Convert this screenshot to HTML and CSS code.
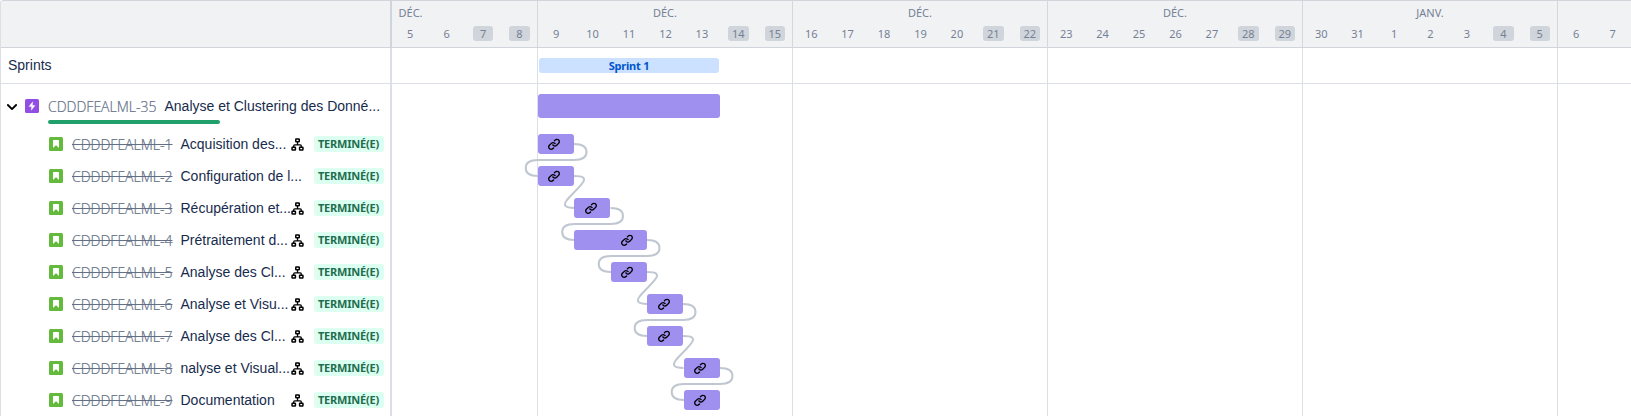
FILE: index.html
```html
<!DOCTYPE html>
<html lang="fr">
<head>
<meta charset="utf-8">
<title>Chronologie</title>
<link rel="stylesheet" href="styles.css">
</head>
<body>
<svg class="defs" aria-hidden="true">
  <symbol id="link" viewBox="0 0 24 24"><path d="M12.856 5.457l-.937.92a1.002 1.002 0 000 1.437 1.047 1.047 0 001.463 0l.984-.966c.967-.95 2.542-1.135 3.602-.288a2.54 2.54 0 01.203 3.81l-2.903 2.852a2.646 2.646 0 01-3.696 0l-1.11-1.09L9 13.57l1.108 1.089c1.822 1.788 4.802 1.788 6.622 0l2.905-2.852a4.558 4.558 0 00-.357-6.82c-1.893-1.517-4.695-1.226-6.422.47M11.144 19.543l.937-.92a1.002 1.002 0 000-1.437 1.047 1.047 0 00-1.462 0l-.985.966c-.967.95-2.542 1.135-3.602.288a2.54 2.54 0 01-.203-3.81l2.903-2.852a2.646 2.646 0 013.696 0l1.11 1.09L15 11.43l-1.108-1.089c-1.822-1.788-4.802-1.788-6.622 0l-2.905 2.852a4.558 4.558 0 00.357 6.82c1.893 1.517 4.695 1.226 6.422-.47"/></symbol>
  <symbol id="story" viewBox="0 0 14 14"><rect width="14" height="14" rx="1.6" fill="#63ba3c"/><path d="M4.6 3h4.8a.6.6 0 01.6.6V11L7 8.2 4 11V3.600a.6.6 0 01.6-.6z" fill="#fff"/></symbol>
  <symbol id="tree" viewBox="0 0 13 13"><g fill="none" stroke="#000" stroke-width="1.5"><rect x="4.75" y="1.05" width="3.5" height="2.7" rx=".5"/><rect x="1.050" y="9.35" width="3.4" height="2.6" rx=".5"/><rect x="8.55" y="9.35" width="3.4" height="2.6" rx=".5"/><path d="M6.500 4v3M2.750 9.300V7.700q0-.9.9-.9h5.700q.9 0 .9.900v1.600" stroke-width="1.300"/></g></symbol>
</svg>
<main class="roadmap">
  <section class="list">
    <div class="list-head"></div>
    <div class="sprints-label">Sprints</div>
    <div class="epic">
      <svg class="chevron" viewBox="0 0 12 8"><path d="M1.900 2L6 6.100 10.100 2" fill="none" stroke="#000" stroke-width="1.900" stroke-linecap="round" stroke-linejoin="round"/></svg>
      <svg class="type" viewBox="0 0 14 14"><rect width="14" height="14" rx="1.6" fill="#904ee2"/><path d="M7.700 2.800L4 7.600h2.600l-.3 3.700L10 6.500H7.400z" fill="#fff" stroke="#fff" stroke-width=".4" stroke-linejoin="round"/></svg>
      <span class="key">CDDDFEALML-35</span><span class="title">Analyse et Clustering des Donné...</span>
    </div>
    <div class="progress"></div>
    <div class="item"><svg class="type"><use href="#story"/></svg><span class="key">CDDDFEALML-1</span><span class="title">Acquisition des...</span><svg class="tree"><use href="#tree"/></svg><span class="status">TERMINÉ(E)</span></div>
    <div class="item"><svg class="type"><use href="#story"/></svg><span class="key">CDDDFEALML-2</span><span class="title">Configuration de l...</span><span class="status">TERMINÉ(E)</span></div>
    <div class="item"><svg class="type"><use href="#story"/></svg><span class="key">CDDDFEALML-3</span><span class="title">Récupération et...</span><svg class="tree"><use href="#tree"/></svg><span class="status">TERMINÉ(E)</span></div>
    <div class="item"><svg class="type"><use href="#story"/></svg><span class="key">CDDDFEALML-4</span><span class="title">Prétraitement d...</span><svg class="tree"><use href="#tree"/></svg><span class="status">TERMINÉ(E)</span></div>
    <div class="item"><svg class="type"><use href="#story"/></svg><span class="key">CDDDFEALML-5</span><span class="title">Analyse des Cl...</span><svg class="tree"><use href="#tree"/></svg><span class="status">TERMINÉ(E)</span></div>
    <div class="item"><svg class="type"><use href="#story"/></svg><span class="key">CDDDFEALML-6</span><span class="title">Analyse et Visu...</span><svg class="tree"><use href="#tree"/></svg><span class="status">TERMINÉ(E)</span></div>
    <div class="item"><svg class="type"><use href="#story"/></svg><span class="key">CDDDFEALML-7</span><span class="title">Analyse des Cl...</span><svg class="tree"><use href="#tree"/></svg><span class="status">TERMINÉ(E)</span></div>
    <div class="item"><svg class="type"><use href="#story"/></svg><span class="key">CDDDFEALML-8</span><span class="title">nalyse et Visual...</span><svg class="tree"><use href="#tree"/></svg><span class="status">TERMINÉ(E)</span></div>
    <div class="item"><svg class="type"><use href="#story"/></svg><span class="key">CDDDFEALML-9</span><span class="title">Documentation</span><svg class="tree"><use href="#tree"/></svg><span class="status">TERMINÉ(E)</span></div>
  </section>
  <section class="timeline">
    <div class="weeks">
      <div class="week first"><div class="month">DÉC.</div><div class="days"><span>5</span><span>6</span><span class="off">7</span><span class="off">8</span></div></div>
      <div class="week"><div class="month">DÉC.</div><div class="days"><span>9</span><span>10</span><span>11</span><span>12</span><span>13</span><span class="off">14</span><span class="off">15</span></div></div>
      <div class="week"><div class="month">DÉC.</div><div class="days"><span>16</span><span>17</span><span>18</span><span>19</span><span>20</span><span class="off">21</span><span class="off">22</span></div></div>
      <div class="week"><div class="month">DÉC.</div><div class="days"><span>23</span><span>24</span><span>25</span><span>26</span><span>27</span><span class="off">28</span><span class="off">29</span></div></div>
      <div class="week"><div class="month">JANV.</div><div class="days"><span>30</span><span>31</span><span>1</span><span>2</span><span>3</span><span class="off">4</span><span class="off">5</span></div></div>
      <div class="week last"><div class="month"></div><div class="days"><span>6</span><span>7</span></div></div>
    </div>
    <div class="sprint-row"><div class="sprint">Sprint 1</div></div>
    <div class="chart">
      <svg class="links" viewBox="392 84 1239 332">
        <defs>
          <path id="loop" d="M36 0C44.500 0 48.500 3 48.500 8S44.500 16 36 16H0C-8.500 16-12.300 19-12.300 24S-8.500 32 0 32"/>
          <path id="slope" d="M36 0C45.500 0 48.500 2 44 7.700C39.500 13.500 33.500 18.500 29 24C25 29.200 26.500 32 36.500 32"/>
        </defs>
        <use href="#loop" x="538" y="144"/><use href="#slope" x="538" y="176"/>
        <use href="#loop" x="574.500" y="208"/>
        <use href="#loop" x="611" y="240"/><use href="#slope" x="611" y="272"/>
        <use href="#loop" x="647" y="304"/><use href="#slope" x="647" y="336"/>
        <use href="#loop" x="684" y="368"/>
      </svg>
      <div class="bar-row epic-row"><div class="bar" style="--start:0;--span:5"></div></div>
      <div class="bar-row"><div class="bar" style="--start:0;--span:1"><svg><use href="#link"/></svg></div></div>
      <div class="bar-row"><div class="bar" style="--start:0;--span:1"><svg><use href="#link"/></svg></div></div>
      <div class="bar-row"><div class="bar" style="--start:1;--span:1"><svg><use href="#link"/></svg></div></div>
      <div class="bar-row"><div class="bar" style="--start:1;--span:2"><svg><use href="#link"/></svg></div></div>
      <div class="bar-row"><div class="bar" style="--start:2;--span:1"><svg><use href="#link"/></svg></div></div>
      <div class="bar-row"><div class="bar" style="--start:3;--span:1"><svg><use href="#link"/></svg></div></div>
      <div class="bar-row"><div class="bar" style="--start:3;--span:1"><svg><use href="#link"/></svg></div></div>
      <div class="bar-row"><div class="bar" style="--start:4;--span:1"><svg><use href="#link"/></svg></div></div>
      <div class="bar-row"><div class="bar" style="--start:4;--span:1"><svg><use href="#link"/></svg></div></div>
    </div>
  </section>
</main>
</body>
</html>
```
FILE: styles.css
```css
* { box-sizing: border-box; }
body { margin: 0; background: #fff; font-family: "Noto Sans", "Open Sans", sans-serif; color: #172b4d; overflow: hidden; }
.defs { position: absolute; width: 0; height: 0; }
.roadmap { display: flex; width: 1631px; height: 416px; overflow: hidden; border-left: 1px solid #dcdfe5; border-top-left-radius: 3px; --day: 36.4286px; }

.list { flex: none; width: 391px; border-right: 2px solid #dcdfe5; }
.list-head { height: 48px; background: #f1f2f4; border-top: 1px solid #d0d4db; border-bottom: 1px solid #d0d4db; border-top-left-radius: 3px; margin-right: -2px; border-right: 2px solid #d0d4db; }
.sprints-label { height: 36px; padding: 0 7px; border-bottom: 1px solid #dcdfe5; font: 14px/35px "Liberation Sans", Arial, sans-serif; }
.epic { display: flex; align-items: center; height: 36px; margin-top: 4px; padding-left: 5px; }
.chevron { width: 12px; height: 8px; margin: 2px 7px 0 0; }
.type { flex: none; width: 14px; height: 14px; }
.key { padding-top: 1px; font: 300 14px/20px "Open Sans", sans-serif; color: #626f86; white-space: nowrap; -webkit-text-stroke: .2px #626f86; }
.title { font: 14px/20px "Liberation Sans", Arial, sans-serif; white-space: nowrap; }
.epic .key { width: 116.5px; margin-left: 9px; }
.progress { width: 172px; height: 4px; margin: -4px 0 4px 47px; border-radius: 2px; background: #22a06b; }
.item { display: flex; align-items: center; height: 32px; padding: 0 6px 0 48px; }
.item .key { width: 108.5px; margin-left: 9px; text-decoration: line-through; }
.tree { width: 13px; height: 13px; margin: 1px 10px 0 auto; }
.status { width: 70px; height: 16px; padding-right: 1px; border-radius: 3px; background: #dcfff1; color: #216e4e; font: 700 11px/16px "Noto Sans", sans-serif; letter-spacing: -.2px; text-align: center; white-space: nowrap; }
.item .title + .status { margin-left: auto; }

.timeline { flex: 1; min-width: 0; }
.weeks { display: flex; height: 48px; background: #f1f2f4; border-top: 1px solid #d0d4db; border-bottom: 1px solid #d0d4db; color: #758195; font-size: 11px; }
.week { flex: none; width: 255px; border-left: 1px solid #d3d7de; text-align: center; }
.week.first { width: 145px; border: 0; }
.week.last { width: 74px; }
.month { height: 24px; line-height: 24px; }
.first .month { text-align: left; padding-left: 6.5px; }
.days { display: flex; height: 17px; }
.days span { flex: none; width: var(--day); line-height: 18px; }
.days .off { width: 20.4286px; height: 15px; line-height: 16px; margin: 1px 8px 0; border-radius: 3px; background: #d0d4db; }
.sprint-row { height: 36px; padding: 10px 0 0 147px; border-bottom: 1px solid #dcdfe5; background: repeating-linear-gradient(90deg, #dcdfe5 0 1px, transparent 1px 255px) 145px 0 no-repeat; }
.sprint { width: 180px; height: 15px; border-radius: 3px; background: #cce0ff; color: #0055cc; font: 700 11px/16px "Noto Sans", sans-serif; letter-spacing: -.2px; text-align: center; }
.chart { position: relative; height: 332px; padding: 4px 0 0 146px; background: repeating-linear-gradient(90deg, #dcdfe5 0 1px, transparent 1px 255px) 145px 0 no-repeat; }
.links { position: absolute; left: 0; top: 0; width: 1239px; height: 332px; fill: none; stroke: #c1c7d0; stroke-width: 2; }
.bar-row { display: flex; align-items: center; height: 32px; }
.epic-row { height: 36px; margin-bottom: 4px; }
.bar { position: relative; display: flex; align-items: center; justify-content: flex-end; width: calc(var(--span) * var(--day) - .4px); height: 20px; margin-left: calc(var(--start) * var(--day)); padding-right: 11.7px; border-radius: 3px; background: #9f8fef; }
.epic-row .bar { height: 24px; }
.bar svg { width: 16px; height: 16px; fill: #000; }
```
